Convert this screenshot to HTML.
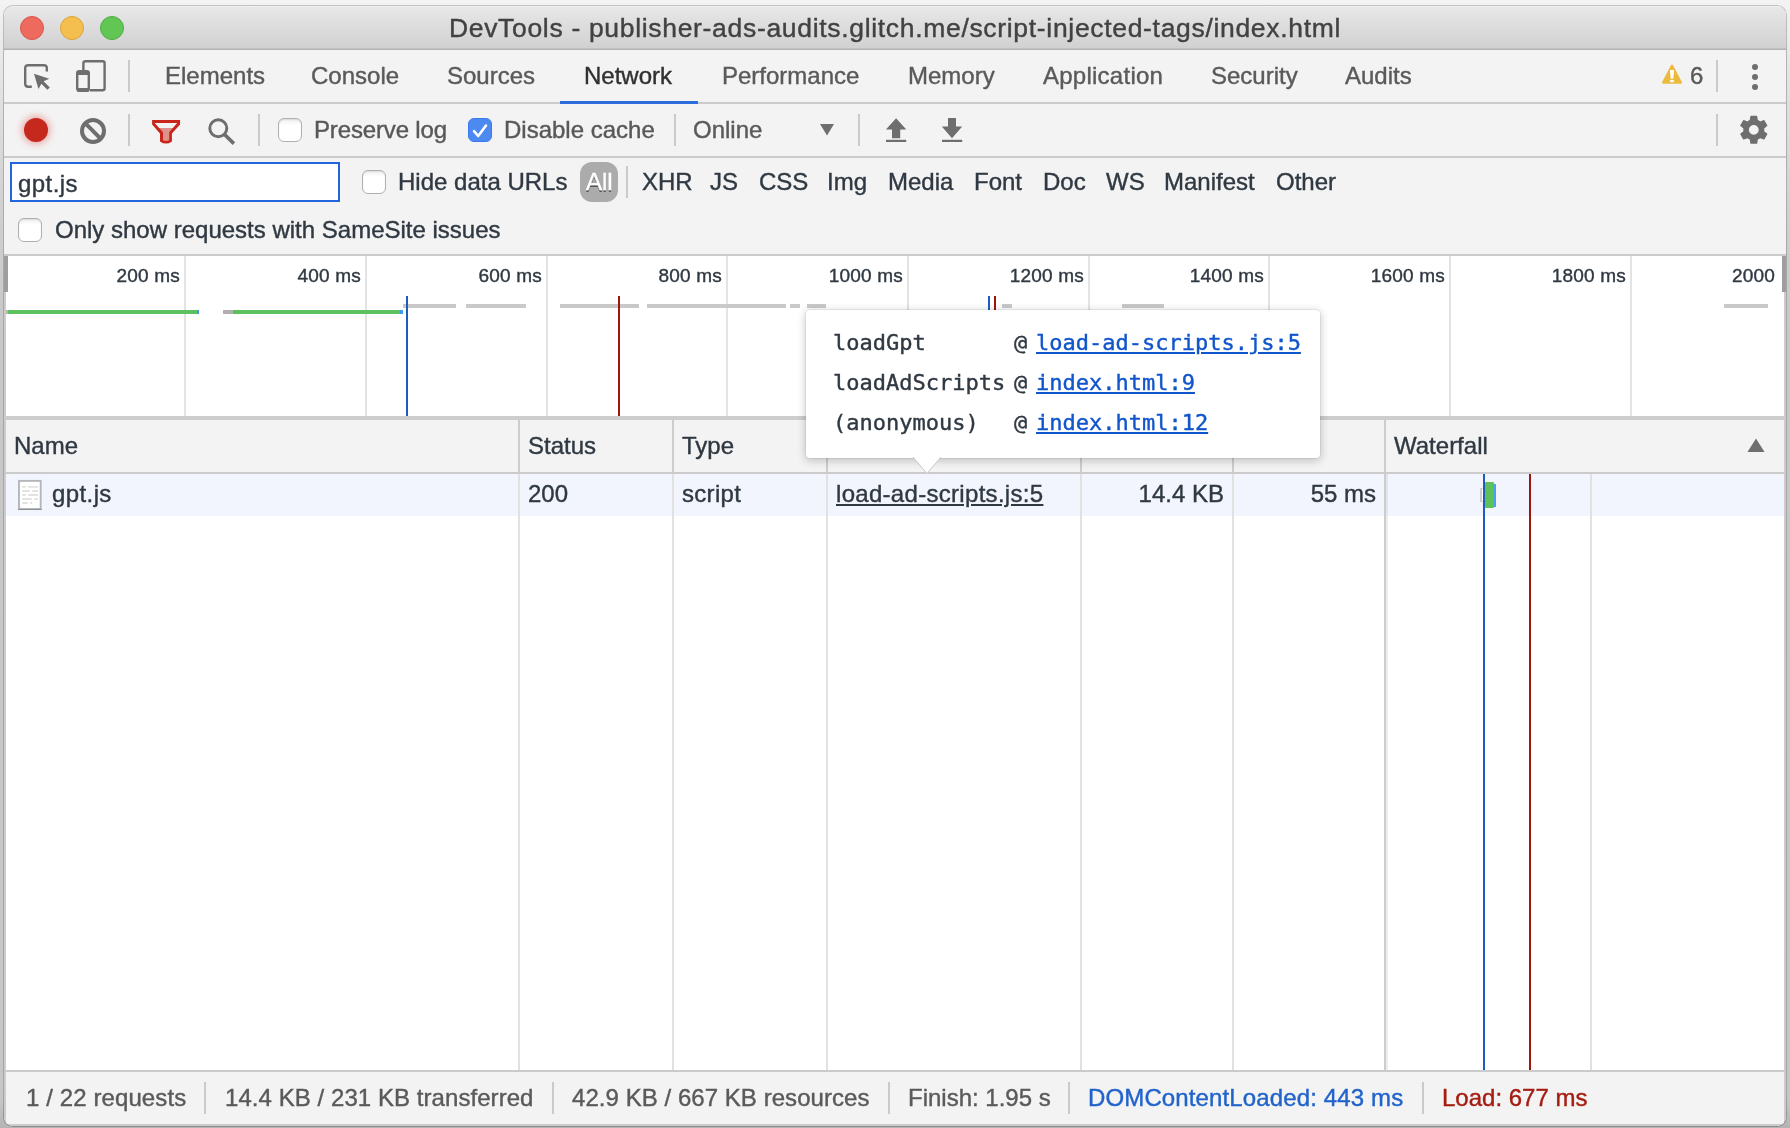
<!DOCTYPE html>
<html lang="en">
<head>
<meta charset="utf-8">
<title>DevTools - publisher-ads-audits.glitch.me/script-injected-tags/index.html</title>
<style>
html,body{margin:0;padding:0;}
body{width:1790px;height:1128px;overflow:hidden;position:relative;background:linear-gradient(to bottom,#f3f3f3 0px,#ededed 30px,#dedede 110px,#cfcfcf 220px,#c8c8c8 330px,#c6c6c6 1100px,#b4b4b4 1128px);
 font-family:"Liberation Sans",sans-serif;font-size:24px;color:#303942;-webkit-text-stroke:0.4px;}
*{box-sizing:border-box;}
.abs{position:absolute;}
.t{position:absolute;white-space:nowrap;line-height:30px;height:30px;}
#frame{position:absolute;left:3px;top:5px;width:1784px;height:1122px;border-radius:10px;
 background:linear-gradient(to bottom,#c2c2c2 0px,#b4b4b4 50px,#a6a6a6 300px,#a4a4a4 1090px,#8c8c8c 1122px);}
#win{position:absolute;left:4px;top:6px;width:1782px;height:1120px;border-radius:9px;
 background:#f3f3f3;overflow:hidden;}
#inner{will-change:transform;position:absolute;left:-4px;top:-6px;width:1790px;height:1128px;}
#titlebar{left:4px;top:6px;width:1782px;height:44px;background:linear-gradient(#f4f4f4 0px,#e7e7e7 1.5px,#d1d1d1 42px,#b2b2b2 43px,#b2b2b2 44px);}
.light{position:absolute;top:16px;width:24px;height:24px;border-radius:50%;}
#title{left:4px;width:1782px;top:13px;text-align:center;font-size:26.5px;letter-spacing:0.68px;color:#424242;}
.hline{position:absolute;left:4px;width:1782px;background:#cbcbcb;}
.vsep{position:absolute;width:2px;background:#cacaca;}
.tab{color:#5a5a5a;top:61px;}
.cb{position:absolute;width:24px;height:24px;border:1.5px solid #b0b0b0;border-radius:6px;background:linear-gradient(#f0f0f0 0px,#fff 6px);box-shadow:inset 0 1px 1.5px rgba(0,0,0,.10);}
.g{position:absolute;top:256px;width:2px;height:160px;background:#e3e3e3;}
.gl{position:absolute;top:264px;font-size:19px;letter-spacing:0.2px;line-height:24px;color:#303942;text-align:right;width:120px;white-space:nowrap;}
.ov{position:absolute;height:4px;}
.col{position:absolute;width:2px;}
.mono{font-family:"DejaVu Sans Mono","Liberation Mono",monospace;font-size:22px;}
.lnk{color:#1155cc;text-decoration:underline;}
.st{top:1083px;color:#5a5a5a;}
</style>
</head>
<body>
<div id="frame"></div>
<div id="win"><div id="inner">

<!-- TITLE BAR -->
<div id="titlebar" class="abs"></div>
<div class="light" style="left:20px;background:#ee6a5f;border:1px solid #d95448;"></div>
<div class="light" style="left:60px;background:#f5bf4f;border:1px solid #dba43a;"></div>
<div class="light" style="left:100px;background:#62c655;border:1px solid #4fac41;"></div>
<div id="title" class="t">DevTools - publisher-ads-audits.glitch.me/script-injected-tags/index.html</div>

<!-- TAB BAR -->

<div class="hline" style="top:102px;height:2px;"></div>
<div id="tabs">
<svg class="abs" style="left:22px;top:62px" width="34" height="34" viewBox="0 0 34 34"><path d="M24.8 9.6 V6.2 Q24.8 3.2 21.8 3.2 H6.2 Q3.2 3.2 3.2 6.2 V21.8 Q3.2 24.8 6.2 24.8 H9.8" fill="none" stroke="#6e6e6e" stroke-width="2.4"/><path d="M12 11.7 L27.3 16.7 L21.6 19.3 L27.8 25.4 L25.4 27.8 L19.3 21.7 L16.5 27 Z" fill="#6e6e6e"/></svg>
<svg class="abs" style="left:74px;top:58px" width="36" height="40" viewBox="0 0 36 40"><path d="M9.4 14 V5.2 Q9.4 3.2 11.4 3.2 H28.6 Q30.6 3.2 30.6 5.2 V30.3 Q30.6 32.3 28.6 32.3 H16" fill="none" stroke="#6e6e6e" stroke-width="2.4"/><rect x="3.2" y="13.2" width="11.6" height="19.6" rx="2" fill="#f3f3f3" stroke="#6e6e6e" stroke-width="2.4"/><rect x="3" y="13" width="12" height="4" fill="#6e6e6e"/><rect x="3" y="30" width="12" height="3.5" fill="#6e6e6e"/></svg>
<div class="vsep" style="left:128px;top:60px;height:32px;"></div>
<div id="tb1" class="t tab" style="left:165px;">Elements</div>
<div id="tb2" class="t tab" style="left:311px;">Console</div>
<div id="tb3" class="t tab" style="left:447px;">Sources</div>
<div id="tb4" class="t tab" style="left:584px;color:#303030;">Network</div>
<div class="abs" style="left:560px;top:101px;width:138px;height:3px;background:#2d6cdc;"></div>
<div id="tb5" class="t tab" style="left:722px;">Performance</div>
<div id="tb6" class="t tab" style="left:908px;">Memory</div>
<div id="tb7" class="t tab" style="left:1043px;letter-spacing:0.25px;">Application</div>
<div id="tb8" class="t tab" style="left:1211px;">Security</div>
<div id="tb9" class="t tab" style="left:1345px;">Audits</div>
<svg class="abs" style="left:1660px;top:62px" width="24" height="24" viewBox="0 0 24 24"><path d="M12 3.8 L20.8 20.6 H3.2 Z" fill="#ecba3c" stroke="#ecba3c" stroke-width="2.4" stroke-linejoin="round"/><path d="M9.9 8 H14.1 L13.3 16.8 H10.7 Z" fill="#fff"/><rect x="10.2" y="18" width="3.6" height="2.2" fill="#fff"/></svg>
<div id="tb10" class="t tab" style="left:1690px;">6</div>
<div class="vsep" style="left:1716px;top:60px;height:32px;"></div>
<div class="abs" style="left:1752px;top:64px;width:6px;height:6px;border-radius:50%;background:#6e6e6e;"></div>
<div class="abs" style="left:1752px;top:74px;width:6px;height:6px;border-radius:50%;background:#6e6e6e;"></div>
<div class="abs" style="left:1752px;top:84px;width:6px;height:6px;border-radius:50%;background:#6e6e6e;"></div>
</div>

<!-- NETWORK TOOLBAR -->
<div class="hline" style="top:156px;height:2px;"></div>
<div id="toolbar">
<div class="abs" style="left:24px;top:118px;width:24px;height:24px;border-radius:50%;background:#c5281c;box-shadow:0 0 7px 2px rgba(217,48,37,.38);"></div>
<svg class="abs" style="left:78px;top:116px" width="30" height="30" viewBox="0 0 30 30"><circle cx="15" cy="15" r="11" fill="none" stroke="#6e6e6e" stroke-width="4"/><path d="M7.2 7.2 L22.8 22.8" stroke="#6e6e6e" stroke-width="4"/></svg>
<div class="vsep" style="left:128px;top:114px;height:32px;"></div>
<svg class="abs" style="left:149px;top:116px" width="34" height="32" viewBox="0 0 34 32"><path d="M3.1 4.1 H31.1 V8.6 L22.9 17.6 V25.4 Q17 29.8 11 25.4 V17.6 L3.1 8.6 Z" fill="#c8261a"/><path d="M5.9 6.9 H28.1 L20.2 16.3 V24.3 Q17 25.6 14 24.3 V16.3 Z" fill="#df908a"/><path d="M5.9 6.9 H28.1 L23.7 12.1 H10.2 Z" fill="#f3f3f3"/></svg>
<svg class="abs" style="left:205px;top:116px" width="34" height="32" viewBox="0 0 34 32"><circle cx="13.3" cy="12.2" r="8.5" fill="none" stroke="#6e6e6e" stroke-width="3"/><path d="M19.3 18.3 L28.9 27.6" stroke="#6e6e6e" stroke-width="3.6"/></svg>
<div class="vsep" style="left:258px;top:114px;height:32px;"></div>
<div class="cb" style="left:278px;top:118px;"></div>
<div id="tl1" class="t" style="left:314px;top:115px;color:#585858;letter-spacing:-0.15px;">Preserve log</div>
<div class="cb" style="left:468px;top:118px;background:#4c89f0;border-color:#3a7af0;box-shadow:none;"></div>
<svg class="abs" style="left:468px;top:118.7px" width="24" height="24" viewBox="0 0 24 24"><path d="M6 12.2 L10.2 17 L18 6.5" fill="none" stroke="#fff" stroke-width="2.6" stroke-linecap="round" stroke-linejoin="round"/></svg>
<div id="tl2" class="t" style="left:504px;top:115px;color:#585858;">Disable cache</div>
<div class="vsep" style="left:674px;top:114px;height:32px;"></div>
<div id="tl3" class="t" style="left:693px;top:115px;color:#5a5a5a;">Online</div>
<svg class="abs" style="left:819px;top:123px" width="16" height="14" viewBox="0 0 16 14"><path d="M1 1 H15 L8 12.5 Z" fill="#6e6e6e"/></svg>
<div class="vsep" style="left:858px;top:114px;height:32px;"></div>
<svg class="abs" style="left:883px;top:116px" width="26" height="28" viewBox="0 0 26 28"><path d="M13.1 2.2 L23.3 13.6 H17.2 V22.2 H9 V13.6 H2.9 Z" fill="#6e6e6e"/><rect x="3" y="23.8" width="20.2" height="2.2" fill="#6e6e6e"/></svg>
<svg class="abs" style="left:939px;top:116px" width="26" height="28" viewBox="0 0 26 28"><path d="M13 22.2 L23.2 10.4 H17 V1.9 H9 V10.4 H2.8 Z" fill="#6e6e6e"/><rect x="3" y="23.8" width="20.2" height="2.2" fill="#6e6e6e"/></svg>
<div class="vsep" style="left:1716px;top:114px;height:32px;"></div>
<svg class="abs" style="left:1737.2px;top:113.2px" width="33.6" height="33.6" viewBox="0 0 24 24"><path fill="#6e6e6e" d="M19.43 12.98c.04-.32.07-.64.07-.98s-.03-.66-.07-.98l2.11-1.65c.19-.15.24-.42.12-.64l-2-3.46c-.12-.22-.39-.3-.61-.22l-2.49 1c-.52-.4-1.08-.73-1.69-.98l-.38-2.65C14.46 2.18 14.25 2 14 2h-4c-.25 0-.46.18-.49.42l-.38 2.65c-.61.25-1.17.59-1.69.98l-2.49-1c-.23-.09-.49 0-.61.22l-2 3.46c-.13.22-.07.49.12.64l2.11 1.65c-.04.32-.07.65-.07.98s.03.66.07.98l-2.11 1.65c-.19.15-.24.42-.12.64l2 3.46c.12.22.39.3.61.22l2.49-1c.52.4 1.08.73 1.69.98l.38 2.65c.03.24.24.42.49.42h4c.25 0 .46-.18.49-.42l.38-2.65c.61-.25 1.17-.59 1.69-.98l2.49 1c.23.09.49 0 .61-.22l2-3.46c.12-.22.07-.49-.12-.64l-2.11-1.65zM12 15.5c-1.93 0-3.5-1.57-3.5-3.5s1.57-3.5 3.5-3.5 3.5 1.57 3.5 3.5-1.57 3.5-3.5 3.5z"/></svg>
</div>

<!-- FILTER BAR -->
<div id="filter">
<div class="abs" style="left:10px;top:162px;width:330px;height:40px;background:#fff;border:2px solid #2265dc;"></div>
<div id="fl0" class="t" style="left:18px;top:169px;letter-spacing:0.45px;">gpt.js</div>
<div class="cb" style="left:362px;top:170px;"></div>
<div id="fl1" class="t" style="left:398px;top:167px;">Hide data URLs</div>
<div class="abs" style="left:580px;top:162px;width:38px;height:40px;border-radius:12px;background:#ababab;"></div>
<div id="fl2" class="t" style="left:586px;top:167px;color:#fff;text-shadow:0 1.5px 0 rgba(0,0,0,.5);">All</div>
<div class="vsep" style="left:626px;top:166px;height:32px;"></div>
<div id="fl3" class="t" style="left:642px;top:167px;">XHR</div>
<div id="fl4" class="t" style="left:710px;top:167px;">JS</div>
<div id="fl5" class="t" style="left:759px;top:167px;">CSS</div>
<div id="fl6" class="t" style="left:827px;top:167px;">Img</div>
<div id="fl7" class="t" style="left:888px;top:167px;">Media</div>
<div id="fl8" class="t" style="left:974px;top:167px;">Font</div>
<div id="fl9" class="t" style="left:1043px;top:167px;">Doc</div>
<div id="fl10" class="t" style="left:1106px;top:167px;">WS</div>
<div id="fl11" class="t" style="left:1164px;top:167px;">Manifest</div>
<div id="fl12" class="t" style="left:1276px;top:167px;">Other</div>
<div class="cb" style="left:18px;top:218px;"></div>
<div id="fl13" class="t" style="left:55px;top:215px;">Only show requests with SameSite issues</div>
</div>
<div class="hline" style="top:254px;height:2px;"></div>

<!-- OVERVIEW -->
<div class="abs" style="left:4px;top:256px;width:1782px;height:870px;background:#cccccc;"></div>
<div id="overview" class="abs" style="left:6px;top:256px;width:1778px;height:160px;background:#fff;"></div>
<div id="ovc">
<div class="g" style="left:184px;"></div>
<div id="gl0" class="gl" style="left:60px;">200 ms</div>
<div class="g" style="left:365px;"></div>
<div id="gl1" class="gl" style="left:241px;">400 ms</div>
<div class="g" style="left:546px;"></div>
<div id="gl2" class="gl" style="left:422px;">600 ms</div>
<div class="g" style="left:726px;"></div>
<div id="gl3" class="gl" style="left:602px;">800 ms</div>
<div class="g" style="left:907px;"></div>
<div id="gl4" class="gl" style="left:783px;">1000 ms</div>
<div class="g" style="left:1088px;"></div>
<div id="gl5" class="gl" style="left:964px;">1200 ms</div>
<div class="g" style="left:1268px;"></div>
<div id="gl6" class="gl" style="left:1144px;">1400 ms</div>
<div class="g" style="left:1449px;"></div>
<div id="gl7" class="gl" style="left:1325px;">1600 ms</div>
<div class="g" style="left:1630px;"></div>
<div id="gl8" class="gl" style="left:1506px;">1800 ms</div>
<div id="gl9" class="gl" style="left:1655px;">2000</div>
<div class="ov" style="left:403px;top:304px;width:53px;background:#c9c9c9;"></div>
<div class="ov" style="left:466px;top:304px;width:60px;background:#c9c9c9;"></div>
<div class="ov" style="left:560px;top:304px;width:79px;background:#c9c9c9;"></div>
<div class="ov" style="left:647px;top:304px;width:139px;background:#c9c9c9;"></div>
<div class="ov" style="left:790px;top:304px;width:10px;background:#c9c9c9;"></div>
<div class="ov" style="left:807px;top:304px;width:19px;background:#c9c9c9;"></div>
<div class="ov" style="left:1002px;top:304px;width:10px;background:#c9c9c9;"></div>
<div class="ov" style="left:1122px;top:304px;width:42px;background:#c9c9c9;"></div>
<div class="ov" style="left:1724px;top:304px;width:44px;background:#c9c9c9;"></div>
<div class="ov" style="left:6px;top:310px;width:2px;background:#b5b5b5;"></div>
<div class="ov" style="left:8px;top:310px;width:189px;background:#5cc05c;"></div>
<div class="ov" style="left:197px;top:310px;width:2px;background:#3e9cf0;"></div>
<div class="ov" style="left:223px;top:310px;width:10px;background:#b0b0b0;"></div>
<div class="ov" style="left:233px;top:310px;width:167px;background:#5cc05c;"></div>
<div class="ov" style="left:400px;top:310px;width:3px;background:#3e9cf0;"></div>
<div class="abs" style="left:406px;top:296px;width:2px;height:120px;background:#1d5bbf;"></div>
<div class="abs" style="left:618px;top:296px;width:2px;height:120px;background:#a0140c;"></div>
<div class="abs" style="left:988px;top:296px;width:2px;height:16px;background:#1d5bbf;"></div>
<div class="abs" style="left:994px;top:296px;width:2px;height:16px;background:#a0140c;"></div>
<div class="abs" style="left:4px;top:256px;width:4px;height:36px;background:#9e9e9e;"></div>
<div class="abs" style="left:1782px;top:256px;width:4px;height:36px;background:#9e9e9e;"></div>
</div>
<div class="hline" style="top:416px;height:4px;background:#cdcdcd;"></div>

<!-- TABLE -->
<div id="grid">
<div class="abs" style="left:6px;top:474px;width:1778px;height:598px;background:#fff;"></div>
<div class="abs" style="left:6px;top:420px;width:1778px;height:52px;background:#f3f3f3;"></div>
<div class="abs" style="left:6px;top:474px;width:1778px;height:42px;background:#f2f5fd;"></div>
<div class="col" style="left:518px;top:420px;height:52px;background:#cdcdcd;"></div>
<div class="col" style="left:518px;top:474px;height:598px;background:#e1e1e1;"></div>
<div class="col" style="left:672px;top:420px;height:52px;background:#cdcdcd;"></div>
<div class="col" style="left:672px;top:474px;height:598px;background:#e1e1e1;"></div>
<div class="col" style="left:826px;top:420px;height:52px;background:#cdcdcd;"></div>
<div class="col" style="left:826px;top:474px;height:598px;background:#e1e1e1;"></div>
<div class="col" style="left:1080px;top:420px;height:52px;background:#cdcdcd;"></div>
<div class="col" style="left:1080px;top:474px;height:598px;background:#e1e1e1;"></div>
<div class="col" style="left:1232px;top:420px;height:52px;background:#cdcdcd;"></div>
<div class="col" style="left:1232px;top:474px;height:598px;background:#e1e1e1;"></div>
<div class="col" style="left:1384px;top:420px;height:52px;background:#cdcdcd;"></div>
<div class="col" style="left:1384px;top:474px;height:598px;background:#cdcdcd;"></div><div class="col" style="left:1386px;top:474px;height:598px;background:rgba(120,125,140,.13);"></div>
<div class="hline" style="top:472px;height:2px;background:#cbcbcb;"></div>
<div id="h1" class="t" style="left:14px;top:431px;">Name</div>
<div id="h2" class="t" style="left:528px;top:431px;">Status</div>
<div id="h3" class="t" style="left:682px;top:431px;">Type</div>
<div id="h4" class="t" style="left:836px;top:431px;">Initiator</div>
<div id="h5" class="t" style="left:1090px;top:431px;">Size</div>
<div id="h6" class="t" style="left:1242px;top:431px;">Time</div>
<div id="h7" class="t" style="left:1394px;top:431px;">Waterfall</div>
<svg class="abs" style="left:1747px;top:437.5px" width="18" height="15" viewBox="0 0 18 15"><path d="M9 0.5 L17.5 14 H0.5 Z" fill="#6e6e6e"/></svg>
<svg class="abs" style="left:16px;top:478px" width="28" height="34" viewBox="0 0 28 34"><rect x="3" y="2.9" width="21.7" height="28.2" fill="#fff" stroke="#b3b7bb" stroke-width="1.9"/><path d="M2.1 31.4 H25.6" stroke="#8f9396" stroke-width="1.2"/><g stroke="#e2e2e2" stroke-width="1.8"><path d="M6.1 8.8 H9.8 M12.2 8.8 H21.9"/><path d="M6.1 13 H13.8 M16.2 13 H21.9"/><path d="M6.1 17 H9.8 M12.2 17 H21.9"/><path d="M6.1 21 H15.8 M18.2 21 H21.9"/><path d="M6.1 25 H11.8 M14.2 25 H16.2"/></g></svg>
<div id="r1" class="t" style="left:52px;top:479px;letter-spacing:0.4px;">gpt.js</div>
<div id="r2" class="t" style="left:528px;top:479px;">200</div>
<div id="r3" class="t" style="left:682px;top:479px;letter-spacing:0.3px;">script</div>
<div id="r4" class="t" style="left:836px;top:479px;text-decoration:underline;letter-spacing:0.3px;">load-ad-scripts.js:5</div>
<div id="r5" class="t" style="left:1024px;width:200px;text-align:right;top:479px;">14.4 KB</div>
<div id="r6" class="t" style="left:1176px;width:200px;text-align:right;top:479px;">55 ms</div>
<div class="abs" style="left:1590px;top:474px;width:2px;height:598px;background:#e1e1e1;"></div>
<div class="abs" style="left:1480px;top:488px;width:5px;height:14px;background:#fff;border:1px solid #d0d0d0;border-left-width:2px;"></div>
<div class="abs" style="left:1483px;top:474px;width:2px;height:598px;background:#1d5bbf;"></div>
<div class="abs" style="left:1529px;top:474px;width:2px;height:598px;background:#a0140c;"></div>
<div class="abs" style="left:1485px;top:482px;width:9px;height:26px;background:#5cc05c;border-radius:1px;"></div>
<div class="abs" style="left:1494px;top:484px;width:2px;height:23px;background:#44a2f0;"></div>
</div>

<!-- TOOLTIP -->
<div id="tip">
<div class="abs" style="left:806px;top:310px;width:514px;height:148px;background:#fff;border-radius:4px;box-shadow:0 0 0 1px rgba(0,0,0,.05),0 2px 9px 1px rgba(0,0,0,.20);"></div>
<svg class="abs" style="left:910px;top:457px" width="34" height="18" viewBox="0 0 34 18"><path d="M3 0 H31 L17 16.6 Z" fill="#fff"/><path d="M3.2 0.2 L17 16.6 L30.8 0.2" fill="none" stroke="#cbc6c6" stroke-width="1"/></svg>
<div id="m1" class="t mono" style="left:833px;top:328px;">loadGpt</div>
<div id="m2" class="t mono" style="left:833px;top:368px;">loadAdScripts</div>
<div id="m3" class="t mono" style="left:833px;top:408px;">(anonymous)</div>
<div class="t mono" style="left:1014px;top:328px;">@</div>
<div class="t mono" style="left:1014px;top:368px;">@</div>
<div class="t mono" style="left:1014px;top:408px;">@</div>
<div id="m4" class="t mono lnk" style="left:1036px;top:328px;">load-ad-scripts.js:5</div>
<div id="m5" class="t mono lnk" style="left:1036px;top:368px;">index.html:9</div>
<div id="m6" class="t mono lnk" style="left:1036px;top:408px;">index.html:12</div>
</div>

<!-- STATUS BAR -->
<div id="status">
<div class="hline" style="top:1070px;height:2px;background:#cbcbcb;"></div>
<div class="abs" style="left:6px;top:1072px;width:1778px;height:52px;background:#f3f3f3;"></div>
<div id="s1" class="t st" style="left:26px;letter-spacing:0.1px;">1 / 22 requests</div>
<div class="vsep" style="left:204px;top:1082px;height:32px;"></div>
<div id="s2" class="t st" style="left:225px;letter-spacing:0.06px;">14.4 KB / 231 KB transferred</div>
<div class="vsep" style="left:552px;top:1082px;height:32px;"></div>
<div id="s3" class="t st" style="left:572px;letter-spacing:0.05px;">42.9 KB / 667 KB resources</div>
<div class="vsep" style="left:888px;top:1082px;height:32px;"></div>
<div id="s4" class="t st" style="left:908px;">Finish: 1.95 s</div>
<div class="vsep" style="left:1068px;top:1082px;height:32px;"></div>
<div id="s5" class="t st" style="left:1088px;color:#2163cb;letter-spacing:0.13px;">DOMContentLoaded: 443 ms</div>
<div class="vsep" style="left:1422px;top:1082px;height:32px;"></div>
<div id="s6" class="t st" style="left:1442px;color:#a61c10;">Load: 677 ms</div>
</div>

</div></div>
</body>
</html>
